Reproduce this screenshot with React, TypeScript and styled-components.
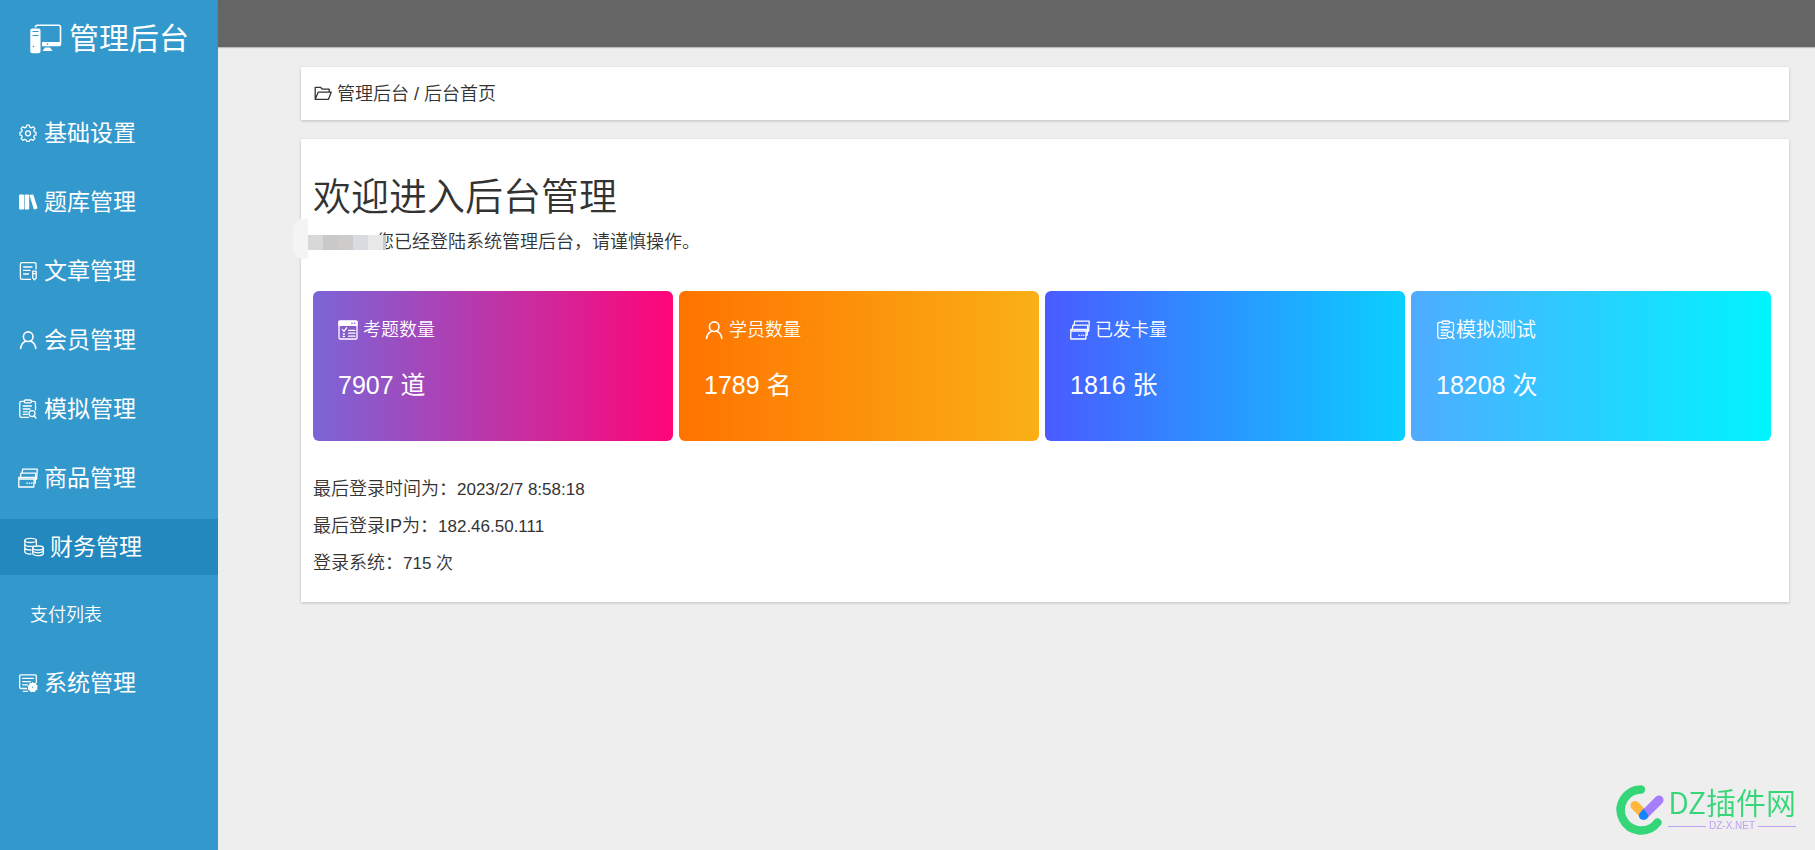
import React from 'react';
import styled, { createGlobalStyle } from 'styled-components';

const GlobalStyle = createGlobalStyle`
  * { box-sizing: border-box; }
  body {
    margin: 0;
    background: #eeeeee;
    color: #333333;
    font-family: "Liberation Sans", "Noto Sans CJK SC", sans-serif;
    font-size: 18px;
    font-weight: 350;
    line-height: 28px;
  }
  h1, p { margin: 0; font-weight: inherit; }
  a { color: inherit; text-decoration: none; }
`;

const Page = styled.div`
  display: flex;
  min-height: 100vh;
`;

const Sidebar = styled.aside`
  flex: 0 0 218px;
  background: #3398cc;
  color: #ffffff;
`;

const Brand = styled.a`
  display: flex;
  align-items: center;
  gap: 7px;
  height: 78px;
  padding-left: 30px;
  margin-bottom: 27px;
  font-size: 30px;
  font-weight: 400;
`;

const Menu = styled.nav`
  display: flex;
  flex-direction: column;
  gap: 13px;
`;

const MenuLink = styled.a<{ $active?: boolean }>`
  display: flex;
  align-items: center;
  gap: 6px;
  height: 56px;
  padding-left: ${(p) => (p.$active ? 24 : 18)}px;
  background: ${(p) => (p.$active ? '#2288bd' : 'transparent')};
  font-size: 23px;
  font-weight: 400;
`;

const SubLink = styled.a`
  display: flex;
  align-items: center;
  height: 54px;
  padding-left: 30px;
`;

const Main = styled.div`
  flex: 1;
  min-width: 0;
`;

const TopBar = styled.header`
  height: 47px;
  background: #666666;
  box-shadow: 0 1px 1px rgba(0, 0, 0, 0.2);
`;

const Content = styled.main`
  display: flex;
  flex-direction: column;
  gap: 19px;
  padding: 20px 26px 20px 83px;
`;

const Card = styled.section`
  background: #ffffff;
  box-shadow: 0 1px 3px rgba(0, 0, 0, 0.2);
`;

const Breadcrumb = styled(Card).attrs({ as: 'nav' })`
  display: flex;
  align-items: center;
  gap: 4px;
  height: 53px;
  padding: 0 12px;
`;

const Welcome = styled(Card)`
  padding: 37px 18px 20px 12px;
`;

const Heading = styled.h1`
  font-size: 38px;
  line-height: 42px;
`;

const Greeting = styled.p`
  position: relative;
  display: flex;
  align-items: center;
  margin-top: 6px;
  line-height: 37px;
`;

const MaskPatch = styled.span`
  position: absolute;
  left: -20px;
  top: -5px;
  width: 15px;
  height: 40px;
  border-radius: 10px 0 0 10px;
  background: #f4f4f4;
`;

const Mask = styled.span`
  position: relative;
  z-index: 1;
  display: flex;
  flex: 0 0 78px;
  height: 15px;
  margin: 0 -10px 0 -5px;
  overflow: hidden;
`;

const MaskBlock = styled.span<{ $color: string }>`
  flex: 0 0 15px;
  background: ${(p) => p.$color};
`;

const Stats = styled.div`
  display: grid;
  grid-template-columns: repeat(4, 1fr);
  gap: 6px;
  margin: 30px 0;
`;

const Stat = styled.article<{ $from: string; $to: string }>`
  height: 150px;
  padding: 25px;
  border-radius: 6px;
  background: linear-gradient(90deg, ${(p) => p.$from}, ${(p) => p.$to});
  color: #ffffff;
`;

const StatLabel = styled.div<{ $large?: boolean }>`
  display: flex;
  align-items: center;
  gap: ${(p) => (p.$large ? 0 : 5)}px;
  font-size: ${(p) => (p.$large ? 20 : 18)}px;
`;

const StatValue = styled.div`
  margin-top: 22px;
  font-size: 25px;
  font-weight: 400;
  line-height: 38px;
`;

const InfoLine = styled.p`
  line-height: 37px;
`;

const InfoValue = styled.span`
  font-size: 17px;
`;

const Watermark = styled.div`
  position: fixed;
  right: 19px;
  bottom: 15px;
  display: flex;
  align-items: center;
  gap: 4px;
  color: #34d678;
`;

const WatermarkText = styled.div`
  display: flex;
  flex-direction: column;
`;

const WatermarkName = styled.span`
  font-family: "Noto Sans CJK SC", sans-serif;
  font-size: 30px;
  line-height: 34px;
`;

const WatermarkSite = styled.span`
  display: flex;
  align-items: center;
  gap: 3px;
  color: #bda2f5;
  font-size: 10px;
  line-height: 16px;

  &::before,
  &::after {
    content: '';
    flex: 1;
    height: 1px;
    background: #bda2f5;
  }
`;

const Svg = styled.svg`
  flex: none;
  display: block;
`;

type IconProps = { children: React.ReactNode };

const Icon = ({ children }: IconProps) => (
  <Svg width="20" height="20" viewBox="0 0 20 20" fill="none" stroke="currentColor" strokeWidth="1.3" strokeLinejoin="round" strokeLinecap="round" aria-hidden="true">
    {children}
  </Svg>
);

const ComputerIcon = () => (
  <Svg width="32" height="30" viewBox="0 0 32 30" aria-hidden="true">
    <path d="M5.5 3.5V3Q5.5 1.2 7.3 1.2H28.7Q30.5 1.2 30.5 3V20Q30.5 21.5 29 21.5H12" fill="none" stroke="#fff" strokeWidth="1.6" />
    <path d="M12 18H30.5V20.5Q30.5 22 29 22H12Z" fill="#fff" />
    <path d="M15 23.5H20L22.5 27H12.5Z" fill="#fff" />
    <rect x="0.3" y="4.5" width="10.2" height="24.7" rx="2" fill="#fff" />
    <path d="M2.5 7.5H8.5M2.5 11.5H8.5" stroke="#3398cc" strokeWidth="1.2" />
    <circle cx="3.5" cy="22.5" r="0.8" fill="#3398cc" />
    <circle cx="17.5" cy="20" r="0.8" fill="#3398cc" />
  </Svg>
);

const GearIcon = () => (
  <Icon>
    <path d="M8.7 2.2h2.6l.5 2 1.5.7 1.8-1.1 1.8 1.8-1.1 1.8.7 1.5 1.5.4v2.6l-1.5.4-.7 1.5 1.1 1.8-1.8 1.8-1.8-1.1-1.5.7-.5 1.3H8.7l-.5-1.3-1.5-.7-1.8 1.1-1.8-1.8 1.1-1.8-.7-1.5-1.5-.4V9.3l1.5-.4.7-1.5-1.1-1.8 1.8-1.8 1.8 1.1 1.5-.7z" />
    <circle cx="10" cy="10.3" r="2.5" />
  </Icon>
);

const BooksIcon = () => (
  <Icon>
    <g fill="currentColor" stroke="none">
      <rect x="1" y="2.5" width="5" height="15" rx="0.8" />
      <rect x="6.6" y="2.5" width="4.6" height="15" rx="0.8" />
      <path d="M11.6 3.4Q11.7 2.9 12.2 2.8L14.6 2.4Q15.2 2.4 15.4 2.9L19.5 15.7Q19.6 16.3 19.1 16.5L16.5 17.4Q15.9 17.5 15.7 17Z" />
    </g>
  </Icon>
);

const ArticleIcon = () => (
  <Icon>
    <path d="M18 8V3.2Q18 1.6 16.4 1.6H4Q2.4 1.6 2.4 3.2V16.8Q2.4 18.4 4 18.4H12.5M5.6 6H14M5.6 9.4H12M5.6 13H10.5" />
    <path d="M14.8 10.2H18.2V17L16.5 18.8L14.8 17ZM14.8 12.6H18.2" />
  </Icon>
);

const UserIcon = () => (
  <Icon>
    <g strokeWidth="1.6">
      <circle cx="10.2" cy="6.7" r="4.8" />
      <path d="M2.6 18.5Q3.3 12.8 8 11M17.8 18.5Q17.1 12.8 12.4 11" />
    </g>
  </Icon>
);

const ClipboardIcon = () => (
  <Icon>
    <path d="M6 2.3H3.5Q1.8 2.3 1.8 4V16.7Q1.8 18.4 3.5 18.4H10.5M14 2.3H15.8Q17.5 2.3 17.5 4V11" />
    <rect x="6.2" y="1" width="7.2" height="2.8" rx="1.2" />
    <path d="M5.2 7H13.5M5.2 10H12M5.2 12.8H9.5M5.2 15.4H9.5" />
    <circle cx="14" cy="14.6" r="3" />
    <path d="M16.2 17L18 19" />
  </Icon>
);

const CardsIcon = () => (
  <Icon>
    <path d="M4.2 4.5L4.7 1.2H19.3L18.6 11.2H17.6" />
    <path d="M2.5 8.5L3 5.2H17.7L17.2 15.2H16.2" />
    <path d="M.8 9.3H16.3L15.8 19H.8ZM.8 11H16" />
    <path d="M8.8 15.2H9.4M11.3 15.2H11.9M13.6 15.2H14" />
  </Icon>
);

const CoinsIcon = () => (
  <Icon>
    <ellipse cx="6.6" cy="3.4" rx="5.8" ry="2.1" />
    <path d="M.8 3.4V15Q1.8 17.3 7 17M12.4 3.4V8M.8 7.2Q2 9.4 6.6 9.4Q9 9.4 10 9M.8 11.1Q2 13 7 13" />
    <ellipse cx="14" cy="11" rx="5.4" ry="2" />
    <path d="M8.6 11V16.4Q9.4 18.6 14 18.6T19.4 16.4V11M8.6 13.7Q9.8 15.8 14 15.8T19.4 13.7" />
  </Icon>
);

const SystemIcon = () => (
  <Icon>
    <path d="M18.3 9.5V3Q18.3 1.9 17.2 1.9H2.8Q1.7 1.9 1.7 3V14.4Q1.7 15.5 2.8 15.5H8.6M4.6 5.4H15.4M4.6 8.6H12.5M4.6 11.8H9.5M5.5 18.3H9.5" />
    <path d="M14.3 9l1.6 1 2-.1.6 1.9 1.3 1.2-.7 1.7.3 2-1.8.9-1 1.6-1.9-.5-2 .5-1-1.6-1.8-.9.4-1.9-.8-1.7 1.5-1.2.7-1.9 1.9.1z" fill="currentColor" stroke="none" />
    <circle cx="14.4" cy="14.2" r="0.6" fill="#3398cc" stroke="none" />
  </Icon>
);

const QuizIcon = () => (
  <Icon>
    <rect x="1" y="1" width="18" height="18" rx="1.2" />
    <path d="M1 1.5H19V5.3H1Z" fill="currentColor" />
    <path d="M13.8 3.2H14.2M16.4 3.2H16.8" stroke="#8a5fcd" />
    <path d="M4.3 9.6L6 11.3L8.6 7.8M10.5 10.3H17M10.5 13.2H17M10.5 16.2H17M5.2 14H6.4M5.2 16.5H6.4" />
  </Icon>
);

const FolderIcon = () => (
  <Icon>
    <path d="M2.2 15.3V3.3H7.5L9.3 5.2H16.2V8.2M2.2 15.3H15.5L18.2 8.2H5.2Z" />
  </Icon>
);

const LogoMark = () => (
  <Svg width="48" height="52" viewBox="0 0 48 52" fill="none" strokeLinecap="round" aria-hidden="true">
    <path d="M25 6.5A20.5 20.5 0 1 0 41.5 39.5" stroke="#34d678" strokeWidth="8.5" />
    <path d="M19 22.5L27.5 31" stroke="#ffb73d" strokeWidth="9" />
    <path d="M43 17L28 32" stroke="#a57dff" strokeWidth="9" />
    <path d="M27.5 25.8L32 31.5A4.6 4.6 0 1 1 23 31.5Z" fill="#1684fc" />
  </Svg>
);

const topItems = [
  { label: '基础设置', icon: <GearIcon /> },
  { label: '题库管理', icon: <BooksIcon /> },
  { label: '文章管理', icon: <ArticleIcon /> },
  { label: '会员管理', icon: <UserIcon /> },
  { label: '模拟管理', icon: <ClipboardIcon /> },
  { label: '商品管理', icon: <CardsIcon /> },
];

const stats = [
  { label: '考题数量', value: '7907 道', icon: <QuizIcon />, from: '#7b65d7', to: '#ff0579' },
  { label: '学员数量', value: '1789 名', icon: <UserIcon />, from: '#ff7300', to: '#fab016' },
  { label: '已发卡量', value: '1816 张', icon: <CardsIcon />, from: '#4a5bff', to: '#0ad0ff' },
  { label: '模拟测试', value: '18208 次', icon: <ClipboardIcon />, from: '#50abff', to: '#00f4ff', large: true },
];

const info = [
  { label: '最后登录时间为：', value: '2023/2/7 8:58:18' },
  { label: '最后登录IP为：', value: '182.46.50.111' },
  { label: '登录系统：', value: '715 次' },
];

const maskColors = ['#d8d8d8', '#c9c9c9', '#cecccb', '#d8dce0', '#e8e8e8', '#c8c8c8'];

export default function App() {
  return (
    <>
      <GlobalStyle />
      <Page>
        <Sidebar>
          <Brand href="#">
            <ComputerIcon />
            管理后台
          </Brand>
          <Menu>
            {topItems.map((item) => (
              <MenuLink key={item.label} href="#">
                {item.icon}
                {item.label}
              </MenuLink>
            ))}
            <MenuLink href="#" $active>
              <CoinsIcon />
              财务管理
            </MenuLink>
            <SubLink href="#">支付列表</SubLink>
            <MenuLink href="#">
              <SystemIcon />
              系统管理
            </MenuLink>
          </Menu>
        </Sidebar>
        <Main>
          <TopBar />
          <Content>
            <Breadcrumb>
              <FolderIcon />
              <span>
                <a href="#">管理后台</a> / 后台首页
              </span>
            </Breadcrumb>
            <Welcome>
              <Heading>欢迎进入后台管理</Heading>
              <Greeting>
                <MaskPatch />
                <Mask>
                  {maskColors.map((color) => (
                    <MaskBlock key={color} $color={color} />
                  ))}
                </Mask>
                您已经登陆系统管理后台，请谨慎操作。
              </Greeting>
              <Stats>
                {stats.map((stat) => (
                  <Stat key={stat.label} $from={stat.from} $to={stat.to}>
                    <StatLabel $large={stat.large}>
                      {stat.icon}
                      {stat.label}
                    </StatLabel>
                    <StatValue>{stat.value}</StatValue>
                  </Stat>
                ))}
              </Stats>
              {info.map((line) => (
                <InfoLine key={line.label}>
                  {line.label}
                  <InfoValue>{line.value}</InfoValue>
                </InfoLine>
              ))}
            </Welcome>
          </Content>
        </Main>
      </Page>
      <Watermark>
        <LogoMark />
        <WatermarkText>
          <WatermarkName>DZ插件网</WatermarkName>
          <WatermarkSite>DZ-X.NET</WatermarkSite>
        </WatermarkText>
      </Watermark>
    </>
  );
}
